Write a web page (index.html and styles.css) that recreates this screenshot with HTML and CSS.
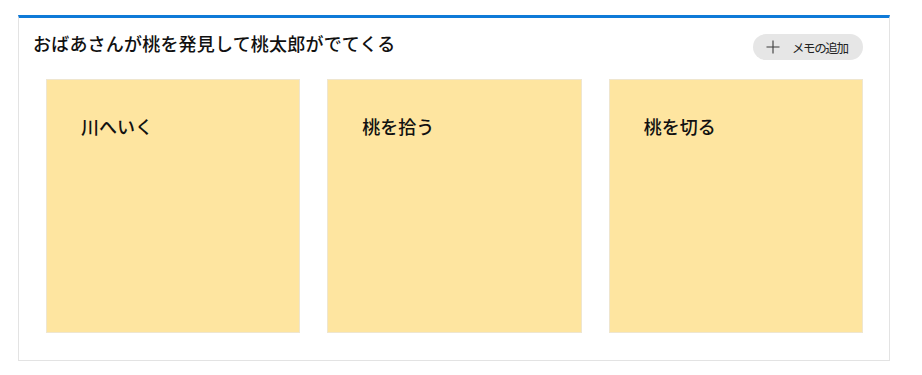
FILE: index.html
```html
<!DOCTYPE html>
<html lang="ja">
<head>
<meta charset="utf-8">
<link rel="stylesheet" href="styles.css">
</head>
<body>
<div class="board">
  <div class="board-header">
    <h1 class="board-title">おばあさんが桃を発見して桃太郎がでてくる</h1>
    <button class="add-btn">
      <svg class="add-icon" width="14" height="14" viewBox="0 0 14 14"><path d="M7 0.5V13.5M0.5 7H13.5" stroke="#3a3a3a" stroke-width="1.1" fill="none"/></svg>
      <span class="add-label">メモの追加</span>
    </button>
  </div>
  <div class="notes">
    <div class="note"><span class="note-text">川へいく</span></div>
    <div class="note"><span class="note-text">桃を拾う</span></div>
    <div class="note"><span class="note-text">桃を切る</span></div>
  </div>
</div>
</body>
</html>
```
FILE: styles.css
```css
html, body {
  margin: 0;
  padding: 0;
  background: #ffffff;
}
body {
  font-family: "Noto Sans CJK JP", "Noto Sans", sans-serif;
  color: #111111;
}
.board {
  margin: 15px 0 0 18px;
  width: 870px;
  border: 1px solid #e3e3e3;
  border-top: 3px solid #0f7ad8;
}
.board-header {
  display: flex;
  justify-content: space-between;
  align-items: flex-start;
  height: 61px;
  padding: 0 26px 0 14px;
}
.board-title {
  margin: 12px 0 0 0;
  font-size: 18px;
  line-height: 26px;
  font-weight: 500;
  letter-spacing: 0.2px;
}
.add-btn {
  margin-top: 16px;
  height: 26px;
  width: 110px;
  border: none;
  border-radius: 13px;
  background: #e6e6e6;
  display: flex;
  align-items: center;
  padding: 0 0 0 13px;
  font-family: inherit;
  cursor: pointer;
}
.add-icon {
  display: block;
  flex: none;
}
.add-label {
  margin-left: 12px;
  font-size: 12.5px;
  color: #222222;
  letter-spacing: -1.4px;
}
.notes {
  display: flex;
  gap: 27px;
  padding: 0 26px 27px 27px;
}
.note {
  flex: 1;
  height: 254px;
  box-sizing: border-box;
  background: #fee5a0;
  border: 1px solid #efe6cf;
  padding: 34px 34px;
}
.note-text {
  font-size: 18px;
  line-height: 24px;
  font-weight: 500;
}
```
